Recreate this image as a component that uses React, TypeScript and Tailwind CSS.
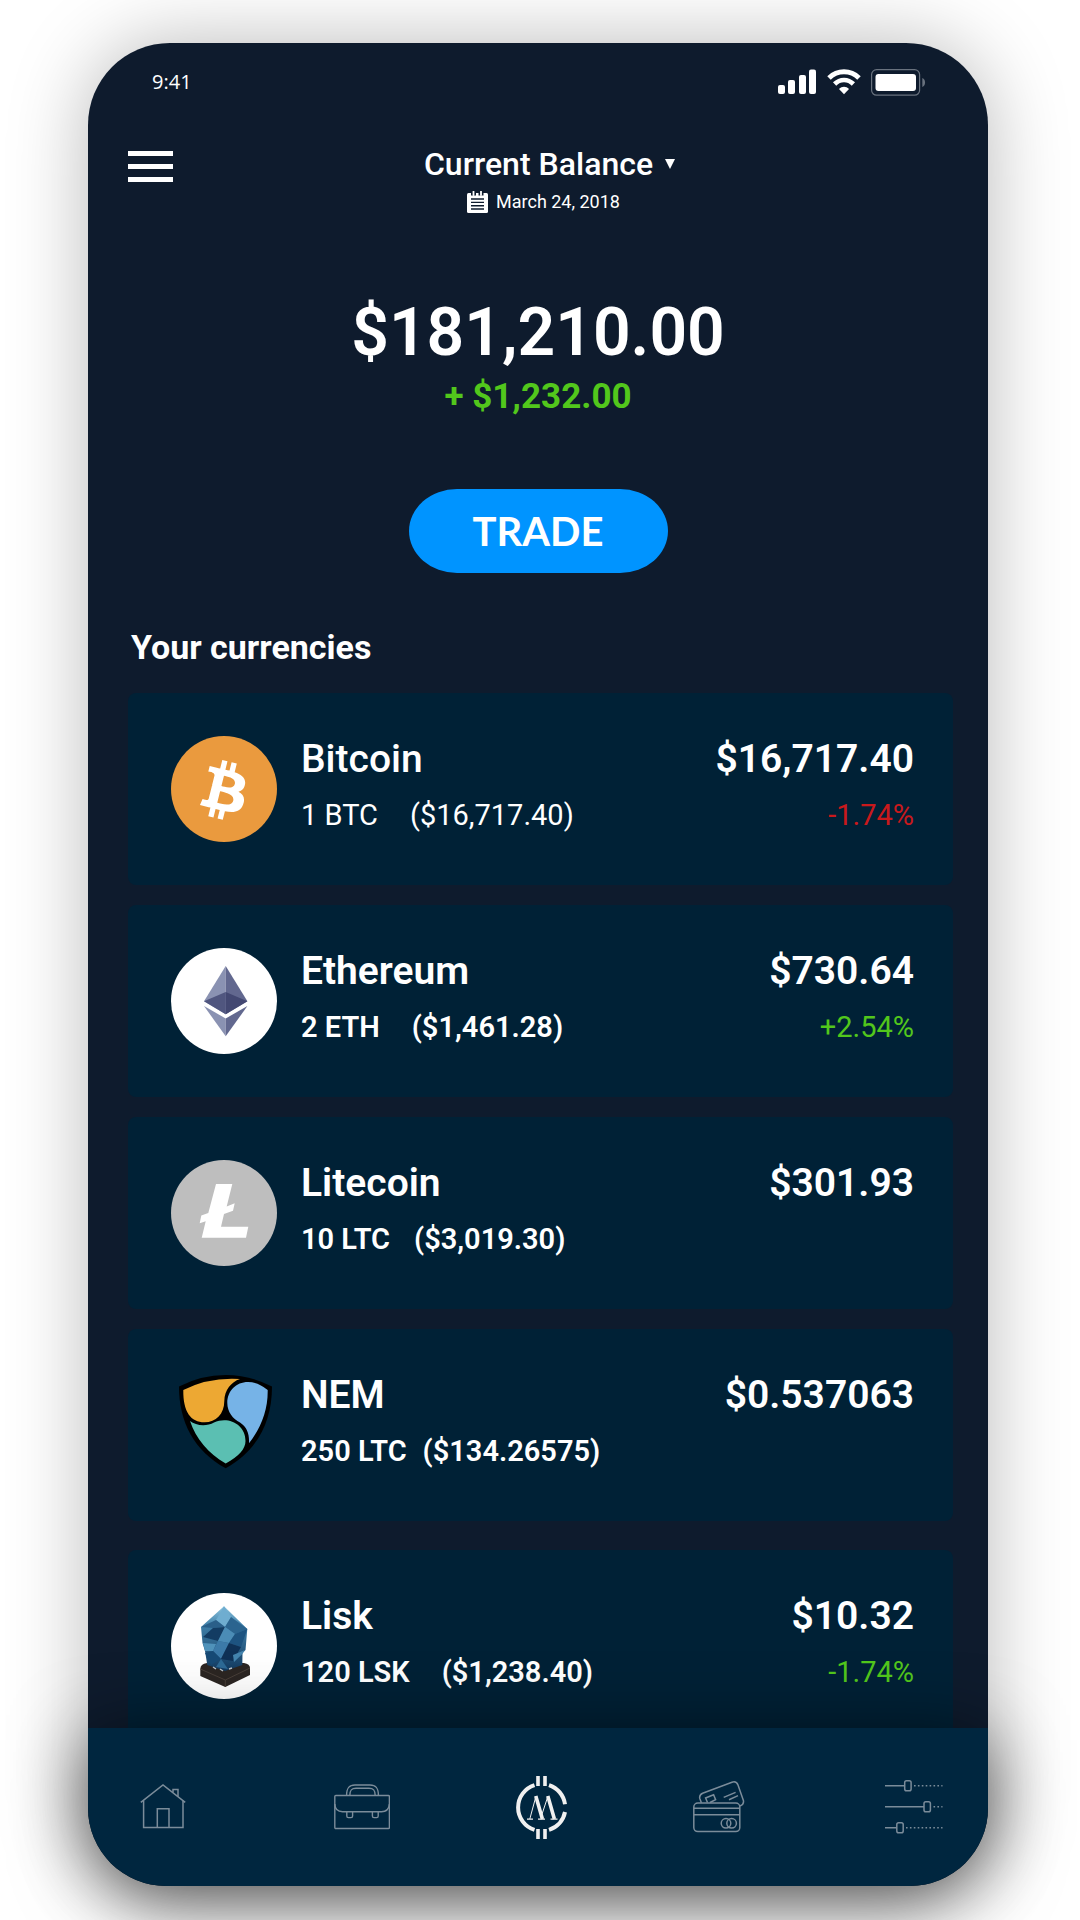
import type { ReactNode } from "react";

function SignalIcon() {
  return (
    <svg width="39" height="26" viewBox="0 0 39 26" fill="#fff" aria-hidden="true">
      <rect x="0" y="16" width="7" height="9" rx="2" />
      <rect x="10" y="11" width="7" height="14" rx="2" />
      <rect x="21" y="6" width="7" height="19" rx="2" />
      <rect x="31" y="0.5" width="7" height="24.5" rx="2" />
    </svg>
  );
}

function WifiIcon() {
  return (
    <svg width="34" height="26" viewBox="0 0 34 26" fill="none" aria-hidden="true">
      <path d="M2 9 C10.5 0.8 23.5 0.8 32 9" stroke="#fff" strokeWidth="5" />
      <path d="M7.6 15 C13 9.6 21 9.6 26.4 15" stroke="#fff" strokeWidth="4.6" />
      <path d="M12 20 C15 17 19 17 22 20 L17 25.2 Z" fill="#fff" />
    </svg>
  );
}

function BatteryIcon() {
  return (
    <svg width="55" height="27" viewBox="0 0 55 27" fill="none" aria-hidden="true">
      <rect x="0.6" y="0.6" width="48" height="25.6" rx="5" stroke="#69727e" strokeWidth="1.2" />
      <rect x="4.5" y="5" width="40.5" height="17" rx="3" fill="#fff" />
      <path d="M51.3 9 C55 10.5 55 16.5 51.3 18 Z" fill="#69727e" />
    </svg>
  );
}

function CalendarIcon() {
  return (
    <svg width="21" height="22" viewBox="0 0 21 22" fill="none" aria-hidden="true">
      <rect x="0" y="2" width="21" height="20" rx="1.5" fill="#fff" />
      <path d="M6.5 0 v4.5 M14 0 v4.5" stroke="#0e1b2d" strokeWidth="5" />
      <path d="M6.5 0.5 v3.5 M14 0.5 v3.5" stroke="#fff" strokeWidth="1.8" strokeLinecap="round" />
      <path d="M4 8 h13 M4 11.4 h13 M4 14.8 h13 M4 18 h13" stroke="#0e1b2d" strokeWidth="1.4" />
    </svg>
  );
}

function BitcoinLogo() {
  return (
    <svg width="106" height="106" viewBox="0 0 106 106" role="img" aria-label="Bitcoin logo">
      <circle cx="53" cy="53" r="53" fill="#ea9a3e" />
      <path
        transform="translate(4.5 6) scale(3)"
        fill="#fff"
        d="M23.189 14.02c.314-2.096-1.283-3.223-3.465-3.975l.708-2.84-1.728-.43-.69 2.765c-.454-.114-.92-.22-1.385-.326l.695-2.783L15.596 6l-.708 2.839c-.376-.086-.746-.17-1.104-.26l.002-.009-2.384-.595-.46 1.846s1.283.294 1.256.312c.7.175.826.638.805 1.006l-.806 3.235c.048.012.11.03.18.057l-.183-.045-1.13 4.532c-.086.212-.303.531-.793.41.018.025-1.256-.313-1.256-.313l-.858 1.978 2.25.561c.418.105.828.215 1.231.318l-.715 2.872 1.727.43.708-2.84c.472.127.93.245 1.378.357l-.706 2.828 1.728.43.715-2.866c2.948.558 5.164.333 6.097-2.333.752-2.146-.037-3.385-1.588-4.192 1.13-.26 1.98-1.003 2.207-2.538zm-3.95 5.538c-.533 2.147-4.148.986-5.32.695l.95-3.805c1.172.293 4.929.872 4.37 3.11zm.535-5.569c-.487 1.953-3.495.96-4.47.717l.86-3.45c.975.243 4.118.696 3.61 2.733z"
      />
    </svg>
  );
}

function EthereumLogo() {
  return (
    <svg width="106" height="106" viewBox="0 0 106 106" role="img" aria-label="Ethereum logo">
      <circle cx="53" cy="53" r="53" fill="#fff" />
      <path d="M54.7 18 L33 53.3 L54.7 66.3 Z" fill="#8a92b2" />
      <path d="M54.7 18 L76.4 53.3 L54.7 66.3 Z" fill="#62688f" />
      <path d="M54.7 44 L33 53.3 L54.7 66.3 Z" fill="#50567f" />
      <path d="M54.7 44 L76.4 53.3 L54.7 66.3 Z" fill="#434872" />
      <path d="M33 58 L54.7 70.5 V88.3 Z" fill="#8a92b2" />
      <path d="M76.4 58 L54.7 70.5 V88.3 Z" fill="#62688f" />
    </svg>
  );
}

function LitecoinLogo() {
  return (
    <svg width="106" height="106" viewBox="0 0 106 106" role="img" aria-label="Litecoin logo">
      <circle cx="53" cy="53" r="53" fill="#bebebe" />
      <path
        d="M45 24 H61.3 L55.7 46.5 L63.7 43.3 L62 50.7 L53 54 L50 66.7 H77.3 L75 77.7 H30.7 L34.7 61.3 L28.7 63.2 L30.3 55.5 L37.3 53 Z"
        fill="#fff"
      />
    </svg>
  );
}

function NemLogo() {
  return (
    <svg width="106" height="106" viewBox="0 0 106 106" role="img" aria-label="NEM logo">
      <path d="M8 14.5 Q30 3 54.7 3 Q79 3 101 14.5 C101 50 86 79 54.7 96.3 C23 79 8 50 8 14.5 Z" fill="#000" />
      <path d="M12.3 18 Q38 5 69 7 C60 10 53.6 18 53.3 29 C53.3 42 45 50.3 33.5 50.3 C20 50.3 12 40 12.3 18 Z" fill="#eda833" />
      <path d="M96.7 18 Q87 10 77 10 C65 10 56.3 19 56.3 31 C56.3 40 62 47 69 50.5 C76 55 78.5 62 78 71.3 C90 56 97 38 96.7 18 Z" fill="#76b3e7" />
      <path d="M19 49 C25 54 36 54.5 43 50.5 C57 44 74.5 52 74.5 69 C74.5 77 68 84 54.7 91.5 C37 81 25 67 19 49 Z" fill="#5bbfb2" />
    </svg>
  );
}

function LiskLogo() {
  return (
    <svg width="106" height="106" viewBox="0 0 106 106" role="img" aria-label="Lisk logo">
      <defs>
        <linearGradient id="crystal" x1="0" y1="0" x2="0" y2="1">
          <stop offset="0" stopColor="#8cc4de" />
          <stop offset="0.3" stopColor="#3f7fa8" />
          <stop offset="1" stopColor="#12395f" />
        </linearGradient>
      </defs>
      <circle cx="53" cy="53" r="53" fill="#fff" />
      <path d="M29.3 76 Q29.3 71 36 70 H73 Q79 71 79 75 V82 L54.3 94 L29.3 83 Z" fill="#2b2522" />
      <path d="M29.3 76 L54.3 87 L79 75 M54.3 87 V94" stroke="#483e38" strokeWidth="1" fill="none" />
      <path d="M53 13.3 L76.3 36 L74.5 57 L71.5 60 L71.3 72 L54 78 L36.3 72 L34 58 L31.5 50 L30 34 Z" fill="url(#crystal)" />
      <path d="M53 13.3 L60 24 L54 34 L45 27 Z" fill="#6fadd0" />
      <path d="M45 27 L54 34 L42 35 L30 34 Z" fill="#2a5f89" />
      <path d="M60 24 L76.3 36 L64 41 L54 34 Z" fill="#2b648f" />
      <path d="M42 35 L54 34 L47 48 L32 44 Z" fill="#133c63" />
      <path d="M54 34 L64 41 L58 50 L47 48 Z" fill="#4b8cb6" />
      <path d="M64 41 L76.3 36 L70 54 L58 50 Z" fill="#1d5380" />
      <path d="M47 48 L58 50 L50 66 L42 58 Z" fill="#3c7aa8" />
      <path d="M32 50 L45 51 L42 58 L34 58 Z" fill="#4f92ba" />
      <path d="M58 50 L70 54 L62 68 L50 66 Z" fill="#0f3156" />
      <path d="M34 60 L42 58 L50 66 L40 72 Z" fill="#174a75" />
      <path d="M62 62 L74 57 L71.3 61 L63 69 Z" fill="#4484ae" />
      <path d="M50 66 L57 76 L45 74 Z" fill="#2d6a96" />
      <path d="M42 74 l3 2 M49 76 l3 2 M58 76 l3 -1" stroke="#b9c2c8" strokeWidth="1.4" />
    </svg>
  );
}

function HomeIcon() {
  return (
    <svg width="46" height="46" viewBox="0 0 46 46" fill="none" stroke="#7b8c9a" strokeWidth="1.5" aria-hidden="true">
      <path d="M0.8 18.3 L23 1 L45.2 18.3" />
      <path d="M3.6 16.5 V43.5 H43 V16.5" />
      <path d="M17.3 43.5 V24.7 H29 V43.5" />
      <path d="M33 8.6 V5.6 H38 V12.4" />
    </svg>
  );
}

function BriefcaseIcon() {
  return (
    <svg width="56" height="46" viewBox="0 0 56 46" fill="none" stroke="#7b8c9a" strokeWidth="1.4" aria-hidden="true">
      <rect x="0.8" y="11.5" width="54.6" height="33" rx="1" />
      <path d="M0.8 20 C1 25 4 27.7 8.5 27.7 H47.5 C52 27.7 55 25 55.4 20" />
      <path d="M12.6 11.5 C12.6 4 15 1 21 1 H36 C42 1 44.4 4 44.4 11.5" />
      <path d="M15.8 11.5 C15.8 6 17.5 4.2 22 4.2 H35 C39.5 4.2 41.2 6 41.2 11.5" />
      <path d="M12.8 27.7 V32 Q12.8 33.6 14.4 33.6 H17 Q18.6 33.6 18.6 32 V27.7" />
      <path d="M38.4 27.7 V32 Q38.4 33.6 40 33.6 H42.6 Q44.2 33.6 44.2 32 V27.7" />
    </svg>
  );
}

function CoinMark() {
  return (
    <svg width="52" height="63" viewBox="0 0 52 63" fill="none" stroke="#f0f0f0" aria-hidden="true">
      <path
        d="M18.5 9.1 A23.5 23.5 0 0 0 18.5 53.9 M33 9.1 A23.5 23.5 0 0 1 49 28.3 M49 36 A23.5 23.5 0 0 1 33 53.9"
        strokeWidth="4"
      />
      <path d="M22 0 V10 M29 0 V10 M22 53 V63 M29 53 V63" strokeWidth="3.6" />
      <path d="M13.8 43 L20 20 M25.4 40 L32 20" strokeWidth="1" />
      <path d="M19.8 20 L26.4 43 M31.8 20 L38.4 43" strokeWidth="3.6" />
      <path d="M11 43.2 H17 M22 43.2 H29 M34.5 43.2 H41.5" strokeWidth="1.2" />
    </svg>
  );
}

function CardsIcon() {
  return (
    <svg width="52" height="52" viewBox="0 0 52 52" fill="none" stroke="#7b8c9a" strokeWidth="1.5" aria-hidden="true">
      <rect x="0.8" y="22" width="46" height="28.6" rx="4" />
      <path d="M0.8 27.2 H46.8 M0.8 33.8 H46.8" />
      <circle cx="33" cy="42.3" r="4.8" />
      <circle cx="38.6" cy="42.3" r="4.8" />
      <path d="M8.4 21.8 L6.8 17.5 Q6 13.8 9.6 12.2 L39 1.2 Q43.4 -0.2 45 4 L50.4 19.5 Q51.2 23.4 47 25" />
      <path d="M14.5 21.5 L12.6 17 L20.6 13.8 L22.6 18.6 L17 21.5" />
      <path d="M30.7 16.4 L42.6 11.4 M36 18.7 L45 14.6" />
    </svg>
  );
}

function SlidersIcon() {
  return (
    <svg width="58" height="54" viewBox="0 0 58 54" fill="none" stroke="#7b8c9a" strokeWidth="1.5" aria-hidden="true">
      <path d="M0 5.8 H19.6 M0 26.8 H39 M0 47.8 H11.6" />
      <path d="M29 5.8 H57.5 M48.5 26.8 H57.5 M21 47.8 H57.5" strokeDasharray="1.6 2.3" />
      <rect x="19.7" y="0.8" width="6.4" height="10" rx="1.8" />
      <rect x="39" y="21.8" width="6.4" height="10" rx="1.8" />
      <rect x="11.8" y="42.8" width="6.4" height="10" rx="1.8" />
    </svg>
  );
}

type Currency = {
  name: string;
  nameClass: string;
  amount: string;
  worth: string;
  amountClass: string;
  price: string;
  change?: string;
  changeClass?: string;
  cardClass: string;
  logo: ReactNode;
};

const currencies: Currency[] = [
  {
    name: "Bitcoin",
    nameClass: "font-medium",
    amount: "1 BTC",
    worth: "($16,717.40)",
    amountClass: "gap-8 font-normal",
    price: "$16,717.40",
    change: "-1.74%",
    changeClass: "text-[#c9191c]",
    cardClass: "mb-5 rounded-lg pb-[43px]",
    logo: <BitcoinLogo />,
  },
  {
    name: "Ethereum",
    nameClass: "font-semibold",
    amount: "2 ETH",
    worth: "($1,461.28)",
    amountClass: "gap-8 font-semibold",
    price: "$730.64",
    change: "+2.54%",
    changeClass: "text-[#52c71c]",
    cardClass: "mb-5 rounded-lg pb-[43px]",
    logo: <EthereumLogo />,
  },
  {
    name: "Litecoin",
    nameClass: "font-semibold",
    amount: "10 LTC",
    worth: "($3,019.30)",
    amountClass: "gap-6 font-semibold",
    price: "$301.93",
    cardClass: "mb-5 rounded-lg pb-[43px]",
    logo: <LitecoinLogo />,
  },
  {
    name: "NEM",
    nameClass: "font-semibold",
    amount: "250 LTC",
    worth: "($134.26575)",
    amountClass: "gap-4 font-semibold",
    price: "$0.537063",
    cardClass: "mb-[29px] rounded-lg pb-[43px]",
    logo: <NemLogo />,
  },
  {
    name: "Lisk",
    nameClass: "font-semibold",
    amount: "120 LSK",
    worth: "($1,238.40)",
    amountClass: "gap-8 font-semibold",
    price: "$10.32",
    change: "-1.74%",
    changeClass: "text-[#52c71c]",
    cardClass: "rounded-t-lg pb-[29px]",
    logo: <LiskLogo />,
  },
];

function CurrencyCard({ item }: { item: Currency }) {
  return (
    <li className={`flex items-start bg-[#002136] pt-[43px] pr-[39px] pl-[43px] ${item.cardClass}`}>
      <div className="shrink-0">{item.logo}</div>
      <div className="ml-6 flex-1">
        <h3 className={`text-[39px] leading-[46px] ${item.nameClass}`}>{item.name}</h3>
        <p className={`mt-[15px] flex text-[29px] leading-9 ${item.amountClass}`}>
          <span>{item.amount}</span>
          <span>{item.worth}</span>
        </p>
      </div>
      <div className="text-right">
        <p className="text-[39px] leading-[46px] font-semibold">{item.price}</p>
        {item.change && <p className={`mt-[15px] text-[29px] leading-9 ${item.changeClass}`}>{item.change}</p>}
      </div>
    </li>
  );
}

const tabs = [
  { label: "Home", icon: <HomeIcon /> },
  { label: "Portfolio", icon: <BriefcaseIcon /> },
  { label: "Market", icon: <CoinMark /> },
  { label: "Cards", icon: <CardsIcon /> },
  { label: "Settings", icon: <SlidersIcon /> },
];

export default function App() {
  return (
    <div className="min-h-screen overflow-hidden bg-white pt-[43px] pr-[92px] pb-[34px] pl-[88px] font-['Roboto',sans-serif] text-white">
      <div className="rounded-t-[82px] rounded-b-[78px] bg-[#0e1b2d] shadow-[0_0_80px_rgba(0,0,0,0.28)]">
        <div className="flex h-[78px] items-center justify-between pr-[62px] pl-16">
          <time className="font-['Open_Sans',sans-serif] text-[20px] leading-6">9:41</time>
          <div className="flex items-center gap-2.5">
            <SignalIcon />
            <WifiIcon />
            <BatteryIcon />
          </div>
        </div>

        <header className="flex items-start pt-[23px] pr-[62px] pl-10">
          <button type="button" aria-label="Menu" className="flex h-11 w-[45px] flex-col justify-center gap-2">
            <span className="h-[5px] w-full bg-white" />
            <span className="h-[5px] w-full bg-white" />
            <span className="h-[5px] w-full bg-white" />
          </button>
          <div className="flex flex-1 flex-col items-center">
            <button type="button" className="flex items-center gap-3 text-[32px] leading-10 font-medium">
              Current Balance
              <svg width="10" height="10" viewBox="0 0 10 10" fill="#fff" aria-hidden="true">
                <path d="M0 0 H10 L5 10 Z" />
              </svg>
            </button>
            <p className="mt-1.5 mr-3 flex items-center gap-2 text-[18px] leading-6">
              <CalendarIcon />
              <span>March 24, 2018</span>
            </p>
          </div>
        </header>

        <section className="flex flex-col items-center pt-[83px]">
          <p className="text-[66px] leading-[72px] font-semibold">$181,210.00</p>
          <p className="mt-2 text-[35px] leading-10 font-bold text-[#52c71c]">+ $1,232.00</p>
          <button
            type="button"
            className="mt-[72px] h-[84px] w-[259px] rounded-[48px/42px] bg-[#0094ff] font-['Lato',sans-serif] text-[40px] leading-12 font-bold"
          >
            TRADE
          </button>
        </section>

        <main className="pt-[54px] pr-[35px] pl-10">
          <h2 className="pl-[3px] text-[34px] leading-10 font-bold">Your currencies</h2>
          <ul className="mt-[26px]">
            {currencies.map((item) => (
              <CurrencyCard key={item.name} item={item} />
            ))}
          </ul>
        </main>

        <nav
          aria-label="Main"
          className="relative grid h-[158px] grid-cols-[150fr_248fr_111fr_243fr_148fr] rounded-b-[78px] bg-[#00263f] shadow-[0_12px_75px_rgba(0,0,0,0.65)]"
        >
          {tabs.map((tab) => (
            <button key={tab.label} type="button" aria-label={tab.label} className="flex items-center justify-center">
              {tab.icon}
            </button>
          ))}
        </nav>
      </div>
    </div>
  );
}
